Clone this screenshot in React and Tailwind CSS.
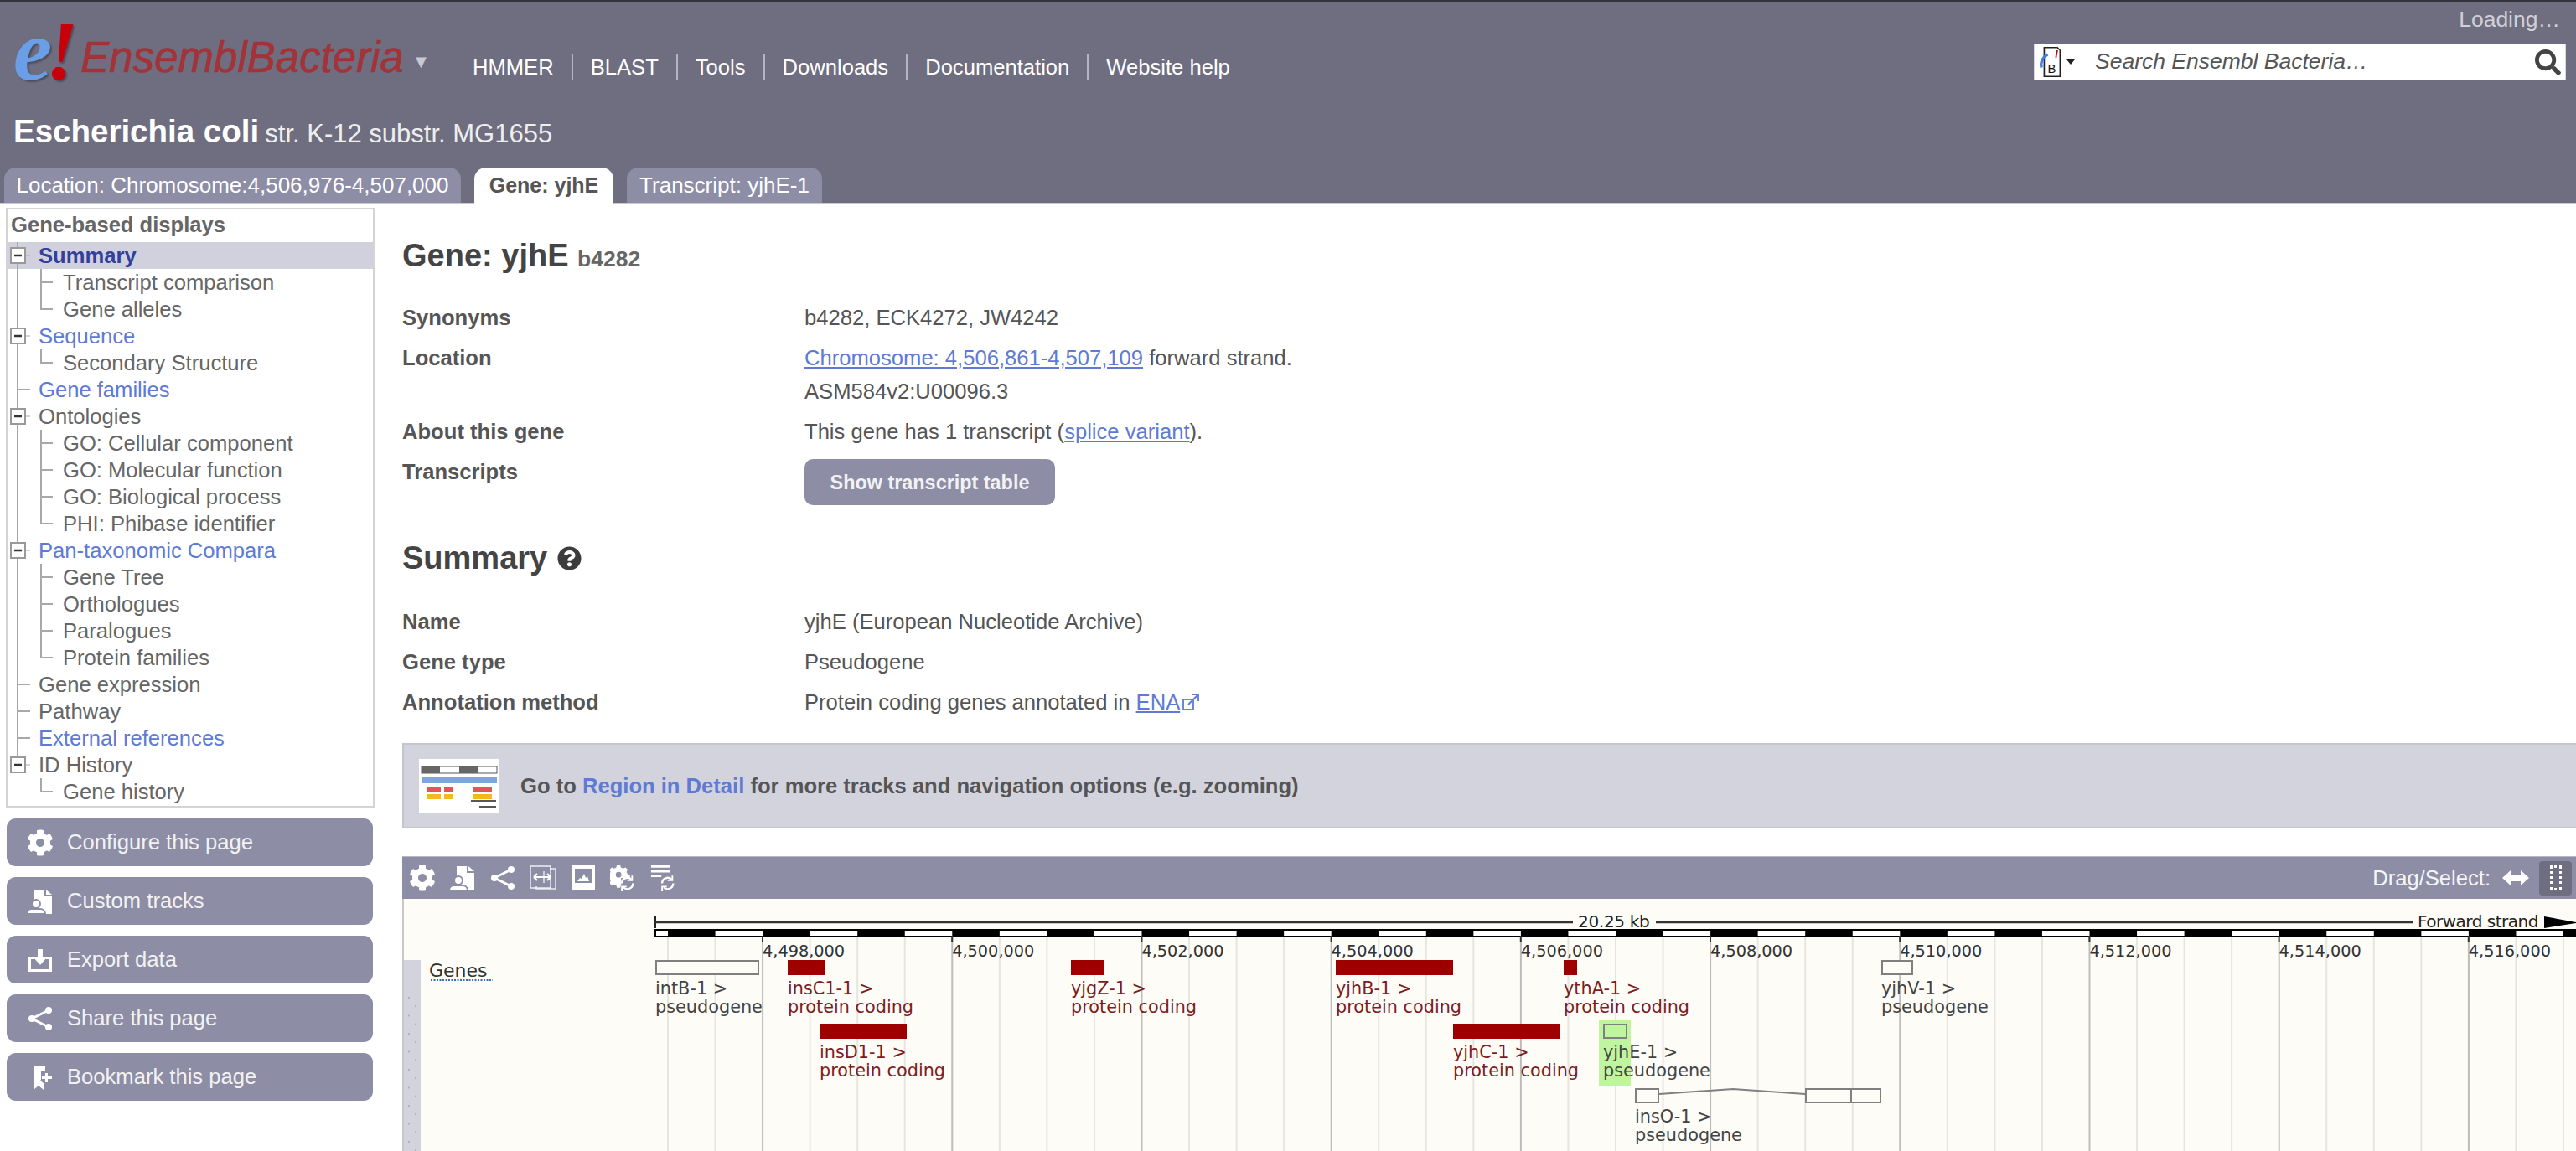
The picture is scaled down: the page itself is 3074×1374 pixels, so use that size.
import { FaCog, FaQuestionCircle, FaSearch } from "react-icons/fa";

const navLinks = ["HMMER", "BLAST", "Tools", "Downloads", "Documentation", "Website help"];

const tree = [
  { t: "Summary", box: true, sel: true },
  { t: "Transcript comparison", sub: true },
  { t: "Gene alleles", sub: true, last: true },
  { t: "Sequence", box: true, link: true },
  { t: "Secondary Structure", sub: true, last: true },
  { t: "Gene families", link: true },
  { t: "Ontologies", box: true },
  { t: "GO: Cellular component", sub: true },
  { t: "GO: Molecular function", sub: true },
  { t: "GO: Biological process", sub: true },
  { t: "PHI: Phibase identifier", sub: true, last: true },
  { t: "Pan-taxonomic Compara", box: true, link: true },
  { t: "Gene Tree", sub: true },
  { t: "Orthologues", sub: true },
  { t: "Paralogues", sub: true },
  { t: "Protein families", sub: true, last: true },
  { t: "Gene expression" },
  { t: "Pathway" },
  { t: "External references", link: true },
  { t: "ID History", box: true, end: true },
  { t: "Gene history", sub: true, last: true, noTrunk: true },
];

function Gutter({ row }) {
  const w = row.sub ? 66 : 37;
  return (
    <svg width={w} height="32" className="shrink-0" stroke="#a8a8a8" strokeWidth="2" fill="none">
      {!row.noTrunk && <line x1="12" y1="0" x2="12" y2={row.end ? 6 : 32} />}
      {row.sub && (
        <>
          <line x1="40" y1="0" x2="40" y2={row.last ? 17 : 32} />
          <line x1="40" y1="16" x2="54" y2="16" />
        </>
      )}
      {!row.sub && !row.box && <line x1="12" y1="16" x2="27" y2="16" />}
      {row.box && (
        <>
          <line x1="22" y1="16" x2="27" y2="16" strokeWidth="1" />
          <rect x="4" y="7" width="17" height="18" fill="#fff" stroke="#999" />
          <line x1="8" y1="16" x2="17" y2="16" stroke="#333" strokeWidth="2.5" />
        </>
      )}
    </svg>
  );
}

function CustomIcon({ className = "w-8 h-8" }) {
  return (
    <svg viewBox="0 0 32 32" className={className} fill="#fff">
      <path d="M9 2h12v8h9v21H9z" />
      <path d="M23 2l7 6h-7z" />
      <circle cx="11" cy="19" r="5" stroke="#8e8da6" strokeWidth="2" />
      <path d="M0 31c0-4 3-6 6-6h10c3 0 6 2 6 6z" stroke="#8e8da6" strokeWidth="2" />
    </svg>
  );
}

function ExportIcon() {
  return (
    <svg viewBox="0 0 32 32" className="w-8 h-8" fill="#fff">
      <path d="M2 12h7v3H5v12h22V15h-4v-3h7v18H2z" />
      <path d="M13 3h6v10h5l-8 9-8-9h5z" />
    </svg>
  );
}

function ShareIcon({ className = "w-8 h-8" }) {
  return (
    <svg viewBox="0 0 32 32" className={className} fill="#fff" stroke="#fff">
      <path d="M26 6L6 16l20 10" fill="none" strokeWidth="3" />
      <circle cx="26" cy="6" r="4" stroke="none" />
      <circle cx="6" cy="16" r="4" stroke="none" />
      <circle cx="26" cy="26" r="4" stroke="none" />
    </svg>
  );
}

function BookmarkIcon() {
  return (
    <svg viewBox="0 0 32 32" className="w-8 h-8" fill="#fff">
      <path d="M8 3h14v6h-5v10l-1 1 4 3v8l-6-5-6 5z" />
      <path d="M22 11h3v4h5v3h-5v4h-3v-4h-4v-3h4z" />
    </svg>
  );
}

function ResizeIcon() {
  return (
    <svg viewBox="0 0 32 32" className="w-8 h-8" fill="none" stroke="#fff" strokeWidth="1.5">
      <path d="M24 5h7v24H8v-3" strokeOpacity="0.8" />
      <rect x="1" y="2" width="24" height="26" strokeOpacity="0.85" />
      <path d="M5 15h20M5 15l4-4M5 15l4 4M25 15l-4-4M25 15l-4 4" strokeWidth="2.2" />
      <path d="M17 8v14" strokeWidth="1.2" />
    </svg>
  );
}

function ImageIcon() {
  return (
    <svg viewBox="0 0 32 32" className="w-8 h-8">
      <rect x="2" y="1" width="28" height="29" fill="#fff" />
      <rect x="6" y="5" width="20" height="17" fill="#8e8da6" />
      <path d="M9 20l3-4 2 1 3-6 2 5 2-2 2 6z" fill="#fff" />
    </svg>
  );
}

function SyncArrows() {
  return (
    <g fill="none" stroke="#fff" strokeWidth="2.5">
      <path d="M15 24a7 7 0 0 1 12-5" />
      <path d="M29 24a7 7 0 0 1-12 5" />
      <path d="M28 14v6h-6" strokeWidth="2" />
      <path d="M15 34v-6h6" strokeWidth="2" />
    </g>
  );
}

function CogSyncIcon() {
  return (
    <svg viewBox="0 0 34 34" className="w-8 h-8">
      <g transform="scale(0.72)">
        <path
          fill="#fff"
          d="M12 1h6l1 4 4 2 4-2 4 4-2 4 2 4 4 1v6l-4 1-2 4 2 4-4 4-4-2-4 2-1 4h-6l-1-4-4-2-4 2-4-4 2-4-2-4-4-1v-6l4-1 2-4-2-4 4-4 4 2 4-2z"
        />
        <circle cx="15" cy="18" r="5" fill="#8e8da6" />
      </g>
      <rect x="14" y="17" width="20" height="17" fill="#8e8da6" />
      <SyncArrows />
    </svg>
  );
}

function TrackSyncIcon() {
  return (
    <svg viewBox="0 0 34 34" className="w-8 h-8">
      <path d="M1 1h24v3H1zM1 7h24v3H1zM1 13h13v3H1z" fill="#fff" />
      <SyncArrows />
    </svg>
  );
}

const grey = "#808080";
const red = "#9e0000";
const genes = [
  { n: "intB-1", b: "pseudogene", x: 782, w: 124, row: 0, pseudo: true },
  { n: "insC1-1", b: "protein coding", x: 940, w: 44, row: 0 },
  { n: "insD1-1", b: "protein coding", x: 978, w: 104, row: 1 },
  { n: "yjgZ-1", b: "protein coding", x: 1278, w: 40, row: 0 },
  { n: "yjhB-1", b: "protein coding", x: 1594, w: 140, row: 0 },
  { n: "yjhC-1", b: "protein coding", x: 1734, w: 128, row: 1 },
  { n: "ythA-1", b: "protein coding", x: 1866, w: 16, row: 0 },
  { n: "yjhE-1", b: "pseudogene", x: 1913, w: 29, row: 1, pseudo: true },
  { n: "yjhV-1", b: "pseudogene", x: 2245, w: 38, row: 0, pseudo: true },
  { n: "insO-1", b: "pseudogene", x: 1951, w: 29, row: 2, pseudo: true },
];
const rowY = [1146, 1222, 1299];

const minor = [];
for (let k = 0; k * 56.55 + 797 < 3074; k++) minor.push(797 + k * 56.55);
const majors = [];
for (let k = 0; k < 10; k++) majors.push({ x: 910 + k * 226.2, label: "4," + (498 + k * 2) + ",000" });
const blacks = [];
for (let k = 0; k * 113.1 + 797 < 3074; k++) blacks.push(797 + k * 113.1);

function GenomeTrack() {
  return (
    <svg viewBox="480 1073 2594 301" className="block w-full h-[301px] bg-[#fdfcf7] font-['DejaVu_Sans',sans-serif]">
      <line x1="481" y1="1073" x2="481" y2="1374" stroke="#c8c8c8" strokeWidth="2" />
      {minor.map((x, i) => (
        <line key={i} x1={x} y1="1117" x2={x} y2="1374" stroke={i % 4 === 2 ? "#bdbdbd" : "#e6e5e0"} strokeWidth="2" />
      ))}

      {/* scale line */}
      <line x1="782" y1="1094" x2="782" y2="1108" stroke="#222" strokeWidth="2" />
      <line x1="782" y1="1101" x2="1877" y2="1101" stroke="#333" strokeWidth="2.5" />
      <line x1="1976" y1="1101" x2="2880" y2="1101" stroke="#333" strokeWidth="2.5" />
      <text x="1883" y="1107" fontSize="20" letterSpacing="-0.3" fill="#222">20.25 kb</text>
      <text x="2885" y="1107" fontSize="20" letterSpacing="-0.5" fill="#222">Forward strand</text>
      <path d="M3036 1094l38 7v1l-38 6z" fill="#000" />

      {/* ruler */}
      <rect x="782" y="1110" width="2292" height="8" fill="#fff" stroke="#000" strokeWidth="2" />
      {blacks.map((x, i) => (
        <rect key={i} x={x} y="1110" width="56.55" height="8" fill="#000" />
      ))}
      {majors.map((m) => (
        <g key={m.x}>
          <line x1={m.x} y1="1117" x2={m.x} y2="1125" stroke="#333" strokeWidth="2" />
          <text x={m.x} y="1142" fontSize="19.3" fill="#333">{m.label}</text>
        </g>
      ))}

      {/* track label */}
      <rect x="482" y="1146" width="20" height="228" fill="#d2d3dd" />
      {[0, 1, 2, 3, 4, 5, 6, 7, 8, 9].map((i) => (
        <g key={i} fill="#b0b1c0">
          <rect x="487" y={1190 + i * 21.5} width="2" height="2" />
          <rect x="495" y={1200 + i * 21.5} width="2" height="2" />
        </g>
      ))}
      <text x="512" y="1166" fontSize="22" fill="#333">Genes</text>
      <line x1="514" y1="1170" x2="588" y2="1170" stroke="#3b6fb5" strokeWidth="2" strokeDasharray="2 1.5" />

      {/* highlighted gene */}
      <rect x="1908" y="1218" width="38" height="78" fill="#bff59f" />

      {/* genes */}
      {genes.map((g) => (
        <g key={g.n}>
          {g.pseudo ? (
            <rect x={g.x + 1} y={rowY[g.row] + 1} width={g.w - 2} height="16" fill={g.n === "yjhE-1" ? "none" : "#fdfcf7"} stroke={grey} strokeWidth="2" />
          ) : (
            <rect x={g.x} y={rowY[g.row]} width={g.w} height="18" fill={red} />
          )}
          <text x={g.x} y={rowY[g.row] + 41} fontSize="20.8" fill={g.pseudo ? "#444" : "#7e1c1c"}>{g.n} &gt;</text>
          <text x={g.x} y={rowY[g.row] + 63} fontSize="20.8" fill={g.pseudo ? "#444" : "#7e1c1c"}>{g.b}</text>
        </g>
      ))}

      {/* rest of insO */}
      <path d="M1980 1306L2068 1300L2154 1306" fill="none" stroke={grey} strokeWidth="2" />
      <rect x="2155" y="1300" width="54" height="16" fill="#fdfcf7" stroke={grey} strokeWidth="2" />
      <rect x="2209" y="1300" width="35" height="16" fill="#fdfcf7" stroke={grey} strokeWidth="2" />
    </svg>
  );
}

export default function App() {
  return (
    <div className="w-[3074px] h-[1374px] overflow-hidden bg-white font-['Liberation_Sans',Arial,sans-serif] text-[25.6px] text-[#555]">
      {/* Masthead */}
      <header className="flex flex-col h-[243px] bg-[#6f6e80] border-t-2 border-[#33333b] border-b border-b-[#c9c9d4]">
        <div className="h-[50px] pt-[6px] pr-[19px] text-right text-[26.5px] leading-[30px] text-[#d0d0d8]">Loading…</div>
        <div className="flex h-[50px] items-start">
          {/* Logo */}
          <div className="flex items-center ml-[16px] -mt-[32px] h-[92px] w-[516px] italic">
            <span className="font-['Liberation_Serif',serif] font-bold text-[104px] leading-[70px] text-[#6a9fe8] tracking-[-8px] -mt-[12px] [text-shadow:2px_2px_2px_rgba(0,0,0,0.3)]">e</span>
            <span className="font-['Liberation_Serif',serif] font-bold text-[100px] leading-[70px] text-[#c8000a] -mt-[10px] [text-shadow:2px_2px_2px_rgba(0,0,0,0.3)]">!</span>
            <span className="text-[51px] leading-none text-[#a23338] ml-[3px] mt-[4px] [-webkit-text-stroke:0.7px_#a23338]">EnsemblBacteria</span>
            <span className="not-italic text-[22px] text-[#c9c9d4] ml-[10px] mt-[14px]">▼</span>
          </div>
          {/* Nav */}
          <nav className="flex ml-[32px] mt-[13px] text-[25.6px] text-white">
            {navLinks.map((l, i) => (
              <a key={l} className={"h-[31px] leading-[31px] " + (i === 0 ? "pr-[21px]" : "px-[21px] border-l-2 border-[#b5b5c2]")}>{l}</a>
            ))}
          </nav>
          {/* Search */}
          <div className="ml-auto mr-[12px] w-[635px] h-[44px] bg-white border border-[#d8d8e0] flex items-center">
            <svg viewBox="0 0 34 46" className="w-[28px] h-[38px] ml-[4px] shrink-0">
              <path d="M9 2h19l4 4v38H9z" fill="#fff" stroke="#222" strokeWidth="2" />
              <path d="M14 12c-7 3-11 12-9 19" fill="none" stroke="#3d7fe0" strokeWidth="4" />
              <path d="M26 6l3 0-2 11h-2z" fill="#c8000a" />
              <text x="14" y="39" fontSize="18" fill="#111" className="font-['Liberation_Sans',sans-serif]">B</text>
            </svg>
            <span className="ml-[6px] w-0 h-0 border-x-[5px] border-x-transparent border-t-[6px] border-t-[#222]" />
            <span className="ml-[24px] italic text-[26.5px] text-[#555]">Search Ensembl Bacteria…</span>
            <FaSearch className="ml-auto mr-[5px] w-[31px] h-[31px] text-[#444]" />
          </div>
        </div>
        <div className="mt-[33px] h-[44px] pl-[16px] leading-[44px] text-[#eee]">
          <span className="text-[38.5px] font-bold text-white">Escherichia coli</span>{" "}
          <span className="text-[31px]">str. K-12 substr. MG1655</span>
        </div>
        <div className="flex mt-auto pl-[5px] h-[42px] items-end gap-[16px]">
          <div className="h-[42px] w-[545px] rounded-t-[14px] bg-[#8e8da6] text-[26px] text-white leading-[42px] text-center">Location: Chromosome:4,506,976-4,507,000</div>
          <div className="h-[43px] -mb-[1px] w-[166px] rounded-t-[14px] bg-white text-[25px] text-[#555] font-bold leading-[42px] text-center">Gene: yjhE</div>
          <div className="h-[42px] w-[233px] rounded-t-[14px] bg-[#8e8da6] text-[26px] text-white leading-[42px] text-center">Transcript: yjhE-1</div>
        </div>
      </header>

      <div className="flex">
        {/* Sidebar */}
        <aside className="ml-[7px] mt-[5px] w-[440px] shrink-0">
          <div className="border-2 border-[#d4d4d4] pb-[1px]">
            <div className="h-[39px] pl-[4px] leading-[36px] font-bold text-[#666]">Gene-based displays</div>
            {tree.map((row) => (
              <div key={row.t} className={"flex h-8 items-center " + (row.sel ? "bg-[#d0d1dc]" : "")}>
                <Gutter row={row} />
                <span className={row.sel ? "font-bold text-[#33409b]" : row.link ? "text-[#5e7bd4]" : "text-[#666]"}>{row.t}</span>
              </div>
            ))}
          </div>
          <div className="mt-[13px] ml-[1px] w-[437px] flex flex-col gap-[13px] text-[#f2f2f2]">
            {[
              [<FaCog key="a" className="w-8 h-8 text-white" />, "Configure this page"],
              [<CustomIcon key="b" />, "Custom tracks"],
              [<ExportIcon key="c" />, "Export data"],
              [<ShareIcon key="d" />, "Share this page"],
              [<BookmarkIcon key="e" />, "Bookmark this page"],
            ].map(([icon, label]) => (
              <div key={label} className="flex h-[57px] items-center rounded-[11px] bg-[#8e8da6]">
                <span className="flex w-[56px] justify-end">{icon}</span>
                <span className="ml-[16px]">{label}</span>
              </div>
            ))}
          </div>
        </aside>

        {/* Main */}
        <main className="ml-[33px] flex-1 min-w-0 pt-[40px]">
          <h1 className="h-[44px] leading-[44px] text-[#444] text-[38px] font-bold">
            Gene: yjhE <span className="text-[26.5px] text-[#666]">b4282</span>
          </h1>

          <div className="mt-[32px] grid grid-cols-[480px_1fr] leading-[40px]">
            <div className="font-bold">Synonyms</div>
            <div>b4282, ECK4272, JW4242</div>
            <div className="mt-[8px] font-bold">Location</div>
            <div className="mt-[8px]">
              <a className="text-[#5e7bd4] underline">Chromosome: 4,506,861-4,507,109</a> forward strand.
              <div>ASM584v2:U00096.3</div>
            </div>
            <div className="mt-[8px] font-bold">About this gene</div>
            <div className="mt-[8px]">
              This gene has 1 transcript (<a className="text-[#5e7bd4] underline">splice variant</a>).
            </div>
            <div className="mt-[8px] font-bold">Transcripts</div>
            <div className="mt-[13px]">
              <button className="block w-[299px] h-[55px] rounded-[10px] bg-[#8e8da6] text-[#f2f2f2] font-bold text-[23.4px]">Show transcript table</button>
            </div>
          </div>

          <h2 className="mt-[41px] flex h-[44px] items-center gap-[12px] text-[38px] font-bold text-[#444]">
            Summary <FaQuestionCircle className="w-[29px] h-[29px] text-[#3c3c3c]" />
          </h2>

          <div className="mt-[34px] grid grid-cols-[480px_1fr] gap-y-[8px] leading-[40px]">
            <div className="font-bold">Name</div>
            <div>yjhE (European Nucleotide Archive)</div>
            <div className="font-bold">Gene type</div>
            <div>Pseudogene</div>
            <div className="font-bold">Annotation method</div>
            <div className="flex items-center">
              Protein coding genes annotated in&nbsp;<a className="text-[#5e7bd4] underline">ENA</a>
              <svg viewBox="0 0 22 22" className="w-[22px] h-[22px] ml-[2px]" fill="none" stroke="#5e7bd4" strokeWidth="1.8">
                <rect x="2" y="8" width="12" height="12" />
                <path d="M8 14L19 3M12 2h8v8" />
              </svg>
            </div>
          </div>

          {/* Region in detail */}
          <div className="mt-[29px] flex h-[102px] items-center border-y-2 border-l-2 border-[#c3c4d1] bg-[#d2d3dd] pl-[18px] font-bold">
            <svg viewBox="0 0 96 64" className="w-[96px] h-[64px] bg-white shrink-0">
              <rect x="3" y="9" width="90" height="8" fill="#fff" stroke="#555" />
              <rect x="3" y="9" width="22" height="8" fill="#666" />
              <rect x="48" y="9" width="22" height="8" fill="#666" />
              <rect x="3" y="22" width="90" height="7" fill="#7ea6dc" />
              <rect x="9" y="33" width="17" height="6" fill="#e05555" />
              <rect x="30" y="33" width="10" height="6" fill="#e05555" />
              <rect x="64" y="33" width="23" height="6" fill="#e05555" />
              <rect x="9" y="42" width="17" height="6" fill="#f5b81f" />
              <rect x="30" y="42" width="10" height="6" fill="#f5b81f" />
              <rect x="64" y="42" width="23" height="6" fill="#f5b81f" />
              <path d="M62 50h30M72 57h20" stroke="#222" strokeWidth="1.5" />
            </svg>
            <span className="ml-[25px]">
              Go to <a className="text-[#5e7bd4]">Region in Detail</a> for more tracks and navigation options (e.g. zooming)
            </span>
          </div>

          {/* Image panel */}
          <div className="mt-[33px]">
            <div className="flex h-[51px] items-center border-t border-[#b8b8c4] bg-[#8e8da6] pl-[8px] pr-[5px]">
              <div className="flex gap-4">
                <FaCog className="w-8 h-8 text-white" />
                <CustomIcon />
                <ShareIcon />
                <ResizeIcon />
                <ImageIcon />
                <CogSyncIcon />
                <TrackSyncIcon />
              </div>
              <span className="ml-auto text-[#f5f5f5]">Drag/Select:</span>
              <svg viewBox="0 0 32 20" className="ml-[14px] w-[32px] h-[20px]" fill="#fff">
                <path d="M0 10l10-9v5h12V1l10 9-10 9v-5H10v5z" />
              </svg>
              <div className="ml-[12px] flex h-[41px] w-[39px] items-center justify-center rounded-[4px] bg-[#6f6e80]">
                <div className="h-[30px] w-[14px] border-[3px] border-dotted border-white" />
              </div>
            </div>
            <GenomeTrack />
          </div>
        </main>
      </div>
    </div>
  );
}
